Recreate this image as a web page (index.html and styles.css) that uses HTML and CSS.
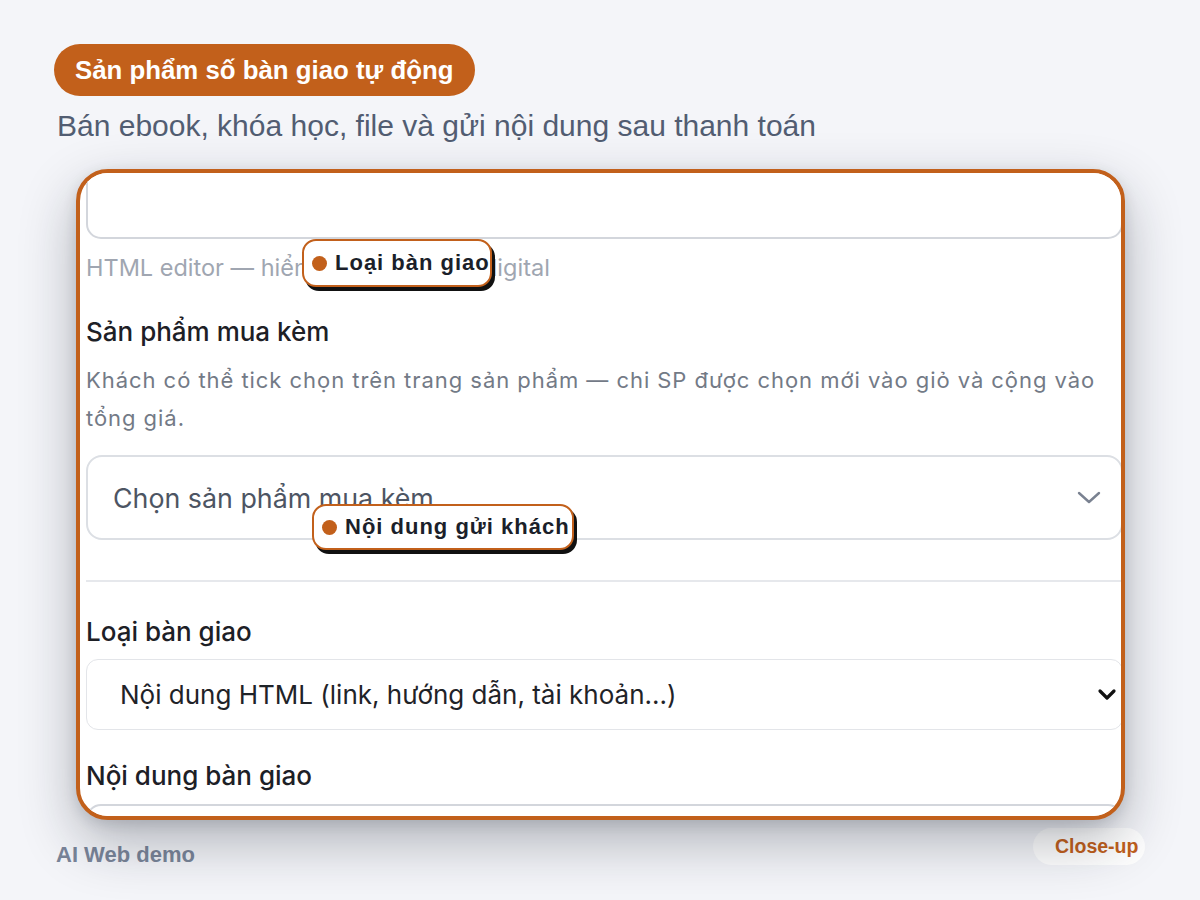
FILE: index.html
```html
<!DOCTYPE html>
<html lang="vi">
<head>
<meta charset="utf-8">
<title>Sản phẩm số bàn giao tự động</title>
<link rel="stylesheet" href="styles.css">
</head>
<body>
<div class="page">
  <div class="badge">Sản phẩm số bàn giao tự động</div>
  <p class="subtitle">Bán ebook, khóa học, file và gửi nội dung sau thanh toán</p>

  <div class="frame">
    <div class="form">
      <div class="box box-top"></div>
      <div class="hint">HTML editor — hiển thị tại trang SP digital</div>

      <div class="label label-first">Sản phẩm mua kèm</div>
      <div class="help">Khách có thể tick chọn trên trang sản phẩm — chi SP được chọn mới vào giỏ và cộng vào tổng giá.</div>

      <div class="box select-multi">
        <span class="placeholder">Chọn sản phẩm mua kèm...</span>
        <svg class="chev-light" width="24" height="14" viewBox="0 0 24 14"><polyline points="2,2 12,11 22,2" fill="none" stroke="#7a8291" stroke-width="2.4" stroke-linecap="round" stroke-linejoin="round"/></svg>
      </div>

      <div class="divider"></div>

      <div class="label label-mid">Loại bàn giao</div>
      <div class="box select-native">
        <span class="value">Nội dung HTML (link, hướng dẫn, tài khoản...)</span>
        <svg class="chev-dark" width="20" height="13" viewBox="0 0 20 13"><polyline points="3,3 10,10 17,3" fill="none" stroke="#111" stroke-width="3.2" stroke-linecap="round" stroke-linejoin="round"/></svg>
      </div>

      <div class="label label-last">Nội dung bàn giao</div>
      <div class="box box-bottom"></div>
    </div>

    <div class="callout callout-a"><span class="dot"></span>Loại bàn giao</div>
    <div class="callout callout-b"><span class="dot"></span>Nội dung gửi khách</div>
  </div>

  <div class="footer">
    <span class="brand">AI Web demo</span>
    <span class="pill">Close-up</span>
  </div>
</div>
</body>
</html>
```

FILE: styles.css
```css
html, body {
  margin: 0;
  padding: 0;
  background: #f4f5f9;
}

body {
  font-family: "Liberation Sans", Arial, sans-serif;
  width: 1200px;
  height: 900px;
  overflow: hidden;
}

.page {
  padding: 44px 0 0 54px;
  width: 1091px;
}

.badge {
  display: inline-block;
  height: 52px;
  line-height: 52px;
  padding: 0 22px 0 21px;
  border-radius: 26px;
  background: #c2601b;
  color: #fff;
  font-weight: 700;
  font-size: 25.8px;
}

.subtitle {
  margin: 12px 0 0 3px;
  font-size: 30px;
  line-height: 36px;
  color: #525d72;
}

.frame {
  position: relative;
  margin: 25px 20px 0 22px;
  height: 643px;
  border: 4px solid #c2601b;
  border-radius: 32px;
  background: #fff;
  overflow: hidden;
  box-shadow: 0 22px 55px rgba(20, 25, 40, 0.30), 0 4px 14px rgba(20, 25, 40, 0.12);
}

.form {
  display: flex;
  flex-direction: column;
  padding-left: 6px;
  margin-right: -2px;
  font-family: Inter, "Noto Sans", sans-serif;
}

.box {
  border: 2px solid #d9dce2;
  border-radius: 15px;
  background: #fff;
  box-sizing: border-box;
}

.box-top {
  height: 96px;
  margin-top: -30px;
  border-color: #d3d6dc;
}

.hint {
  margin-top: 15px;
  font-size: 23.5px;
  line-height: 28px;
  color: #a0a6b1;
  white-space: nowrap;
}

.label {
  font-size: 26px;
  line-height: 32px;
  font-weight: 500;
  color: #1d2026;
}

.label-first { margin-top: 34px; }

.help {
  margin-top: 13px;
  font-size: 22px;
  letter-spacing: 0.95px;
  line-height: 38px;
  color: #737a86;
  padding-right: 10px;
}

.select-multi {
  margin-top: 18px;
  height: 85px;
  display: flex;
  align-items: center;
  justify-content: space-between;
  padding: 0 20px 0 25px;
  border-color: #dcdfe4;
  border-radius: 16px;
}

.placeholder {
  font-size: 26.8px;
  color: #4d5563;
}

.divider {
  margin-top: 40px;
  height: 2px;
  background: #e6e8ec;
}

.label-mid { margin-top: 34px; }

.select-native {
  margin-top: 11px;
  height: 71px;
  display: flex;
  align-items: center;
  justify-content: space-between;
  padding: 0 5px 0 33px;
  border: 1.5px solid #e3e5e9;
  border-radius: 12px;
}

.value {
  font-size: 26px;
  color: #1f2328;
}

.label-last { margin-top: 30px; }

.box-bottom {
  margin-top: 12px;
  height: 80px;
  border-color: #d3d6dc;
}

.callout {
  position: absolute;
  display: flex;
  align-items: center;
  gap: 8px;
  box-sizing: border-box;
  background: #fff;
  border: 2.5px solid #c2601b;
  border-radius: 14px;
  box-shadow: 3px 4px 0 #111;
  font-family: "Liberation Sans", Arial, sans-serif;
  font-weight: 700;
  font-size: 22px;
  letter-spacing: 1px;
  color: #1b1f2a;
  white-space: nowrap;
  padding-left: 8px;
}

.callout-a {
  left: 222px;
  top: 66px;
  width: 190px;
  height: 48px;
}

.callout-b {
  left: 232px;
  top: 331px;
  width: 262px;
  height: 46px;
}

.dot {
  width: 15px;
  height: 15px;
  border-radius: 50%;
  background: #c2601b;
  flex: none;
}

.footer {
  display: flex;
  justify-content: space-between;
  align-items: center;
  margin-top: 8px;
  height: 37px;
}

.brand {
  margin: 16px 0 0 2px;
  font-weight: 700;
  font-size: 22px;
  color: #7a8599;
}

.pill {
  height: 37px;
  line-height: 37px;
  padding: 0 7px 0 22px;
  width: 112px;
  box-sizing: border-box;
  background: #fff;
  border-radius: 19px;
  color: #c2601b;
  font-weight: 700;
  font-size: 19.5px;
  white-space: nowrap;
}
```
